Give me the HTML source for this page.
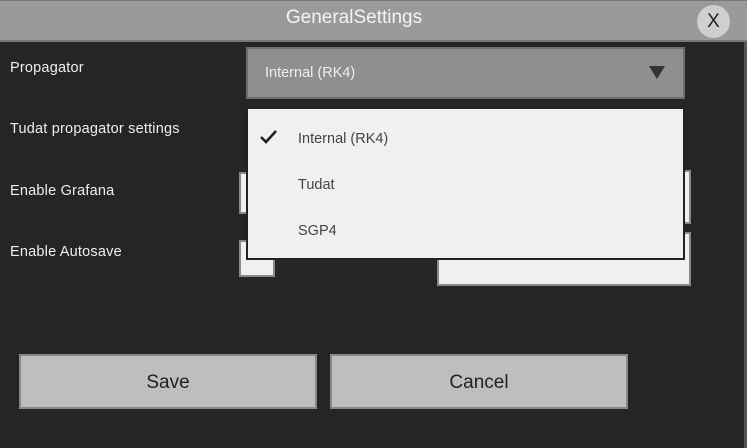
<!DOCTYPE html>
<html><head><style>
body{margin:0;width:747px;height:448px;background:#252525;font-family:"Liberation Sans",sans-serif;position:relative;overflow:hidden}
div{position:absolute;box-sizing:border-box}
.lbl{color:#eee;font-size:14.5px;left:10px;letter-spacing:0.2px}
.btn{background:#bebebe;border:2px solid #888;color:#222;font-size:19px;text-align:center;line-height:54px;top:354px;height:55px}
</style></head><body>
<div style="left:0;top:0;width:747px;height:42px;background:#9a9a9a;border-top:1px solid #777;border-bottom:2px solid #777"></div>
<div style="left:0;top:7px;width:708px;text-align:center;color:#f4f4f4;font-size:19px">GeneralSettings</div>
<div style="left:697px;top:5px;width:33px;height:33px;border-radius:50%;background:#cfcfcf;color:#222;font-size:19px;text-align:center;line-height:33px">X</div>
<div style="left:744px;top:42px;width:3px;height:406px;background:#555"></div>
<div class="lbl" style="top:60px">Propagator</div>
<div class="lbl" style="top:121px">Tudat propagator settings</div>
<div class="lbl" style="top:183px">Enable Grafana</div>
<div class="lbl" style="top:244px">Enable Autosave</div>
<div style="left:246px;top:47px;width:439px;height:52px;background:#8f8f8f;border:2px solid #6e6e6e"></div>
<div style="left:265px;top:65px;color:#eee;font-size:14.5px">Internal (RK4)</div>
<div style="left:649px;top:66px;width:0;height:0;border-left:8px solid transparent;border-right:8px solid transparent;border-top:13px solid #333"></div>
<div style="left:239px;top:172px;width:36px;height:42px;background:#f0f0f0;border:2px solid #888"></div>
<div style="left:437px;top:170px;width:254px;height:54px;background:#f0f0f0;border:2px solid #888"></div>
<div style="left:239px;top:240px;width:36px;height:37px;background:#f0f0f0;border:2px solid #888"></div>
<div style="left:437px;top:232px;width:254px;height:54px;background:#f0f0f0;border:2px solid #888"></div>
<div style="left:246px;top:107px;width:439px;height:153px;background:#f0f0f0;border:2px solid #222"></div>
<svg style="position:absolute;left:259px;top:129px" width="20" height="16"><path d="M2 8 L7 13 L17 2" stroke="#222" stroke-width="2.6" fill="none"/></svg>
<div style="left:298px;top:131px;color:#444;font-size:14.5px">Internal (RK4)</div>
<div style="left:298px;top:177px;color:#444;font-size:14.5px">Tudat</div>
<div style="left:298px;top:223px;color:#444;font-size:14.5px">SGP4</div>
<div class="btn" style="left:19px;width:298px">Save</div>
<div class="btn" style="left:330px;width:298px">Cancel</div>
</body></html>
